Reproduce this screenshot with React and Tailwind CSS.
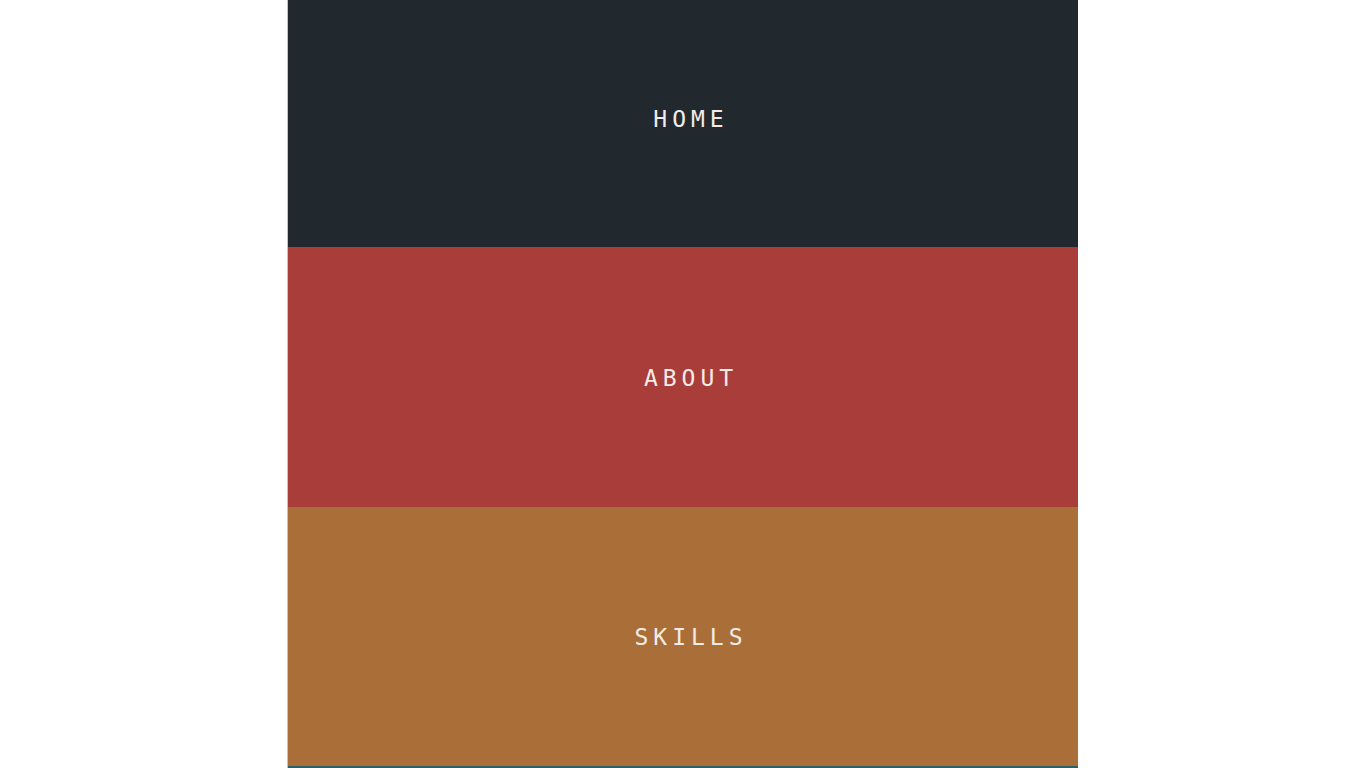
import React from 'react';

const sections = [
  { label: 'HOME', bg: 'bg-[#22292e]', h: 'h-[247px]', pb: 'pb-[8px]' },
  { label: 'ABOUT', bg: 'bg-[#a93d3a]', h: 'h-[260px]', pb: 'pt-[2px]' },
  { label: 'SKILLS', bg: 'bg-[#aa6f39]', h: 'h-[259px]', pb: 'pt-[2px]' },
];

const App = () => {
  return (
    <div className="w-[1366px] h-[768px] bg-white flex justify-center overflow-hidden">
      <div className="w-[791px] ml-[-1px] flex flex-col border-l border-[#c9c3c3]">
        {sections.map((s) => (
          <div
            key={s.label}
            className={`${s.bg} ${s.h} ${s.pb} flex items-center justify-center`}
          >
            <span
              className="text-[#f3ece6] text-[23px] tracking-[5px] pl-[16px]"
              style={{ fontFamily: '"DejaVu Sans Mono", monospace' }}
            >
              {s.label}
            </span>
          </div>
        ))}
        <div className="h-[2px] bg-[#2e5f66]" />
      </div>
    </div>
  );
};

export default App;
